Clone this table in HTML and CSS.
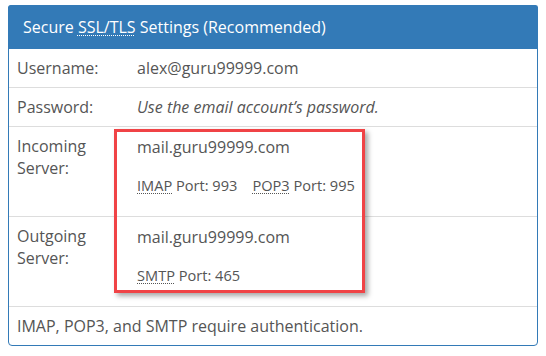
FILE: index.html
```html
<!DOCTYPE html>
<html>
<head>
<meta charset="utf-8">
<link rel="stylesheet" href="styles.css">
</head>
<body>
<div class="panel">
  <div class="panel-heading">Secure <abbr title="Secure Sockets Layer/Transport Layer Security">SSL/TLS</abbr> Settings (Recommended)</div>
  <table class="settings">
    <tr>
      <td class="label">Username:</td>
      <td class="value">alex@guru99999.com</td>
    </tr>
    <tr>
      <td class="label">Password:</td>
      <td class="value"><em>Use the email account’s password.</em></td>
    </tr>
    <tr>
      <td class="label">Incoming Server:</td>
      <td class="value">
        <div class="host">mail.guru99999.com</div>
        <div class="ports"><span class="port"><abbr>IMAP</abbr> Port: 993</span><span class="port"><abbr>POP3</abbr> Port: 995</span></div>
      </td>
    </tr>
    <tr>
      <td class="label">Outgoing Server:</td>
      <td class="value">
        <div class="host">mail.guru99999.com</div>
        <div class="ports"><span class="port"><abbr>SMTP</abbr> Port: 465</span></div>
      </td>
    </tr>
    <tr>
      <td class="footer" colspan="2">IMAP, POP3, and SMTP require authentication.</td>
    </tr>
  </table>
  <div class="highlight"></div>
</div>
</body>
</html>
```

FILE: styles.css
```css
html, body {
  margin: 0;
  padding: 0;
  background: #fff;
}
body {
  padding: 5px 8px 0 8px;
  font-family: "Open Sans", "Noto Sans", sans-serif;
  color: #555;
}
.panel {
  position: relative;
  width: 530px;
  box-sizing: border-box;
  border: 1px solid #337ab7;
  border-radius: 4px;
  background: #fff;
}
.panel-heading {
  background: #337ab7;
  color: #fff;
  font-size: 16px;
  line-height: 23px;
  padding: 10px 14px;
  border-radius: 3px 3px 0 0;
  margin: -1px -1px 0 -1px;
  border: 1px solid #337ab7;
  border-bottom: none;
}
abbr {
  text-decoration: underline dotted;
  text-decoration-thickness: 1px;
  text-underline-offset: 2px;
  cursor: help;
}
.settings {
  width: 100%;
  border-collapse: collapse;
  font-size: 16px;
  line-height: 22px;
}
.settings td {
  padding: 8px 8px;
  vertical-align: top;
  border-top: 1px solid #ddd;
}
.settings tr:first-child td {
  border-top: none;
}
.label {
  width: 104px;
}
.host {
  line-height: 24px;
}
.ports {
  font-size: 14.6px;
  line-height: 20px;
  margin: 16px 0 13px 0;
}
.port + .port {
  margin-left: 15px;
}
.footer {
  padding-top: 9px;
}
.highlight {
  position: absolute;
  left: 105px;
  top: 123px;
  width: 245px;
  height: 158px;
  border: 3px solid #f04346;
  box-shadow: 3px 3px 5px rgba(0,0,0,0.35);
  pointer-events: none;
}
```
